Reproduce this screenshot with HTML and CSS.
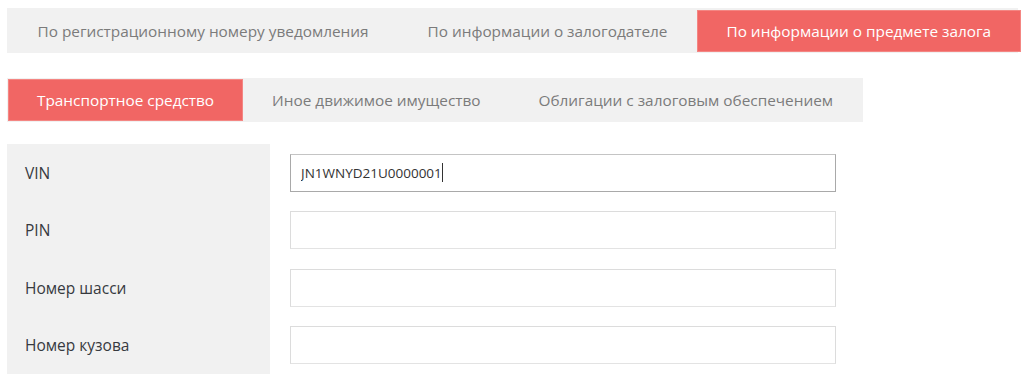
FILE: index.html
```html
<!DOCTYPE html>
<html lang="ru">
<head>
    <meta charset="UTF-8">
    <meta name="viewport" content="width=device-width, initial-scale=1.0">
    <title>Поиск в реестре залогов</title>
    <link rel="stylesheet" href="styles.css">
</head>
<body>
    <!-- Search mode tabs -->
    <div class="tabs tabs-main">
        <button class="tab">По регистрационному номеру уведомления</button>
        <button class="tab">По информации о залогодателе</button>
        <button class="tab active">По информации о предмете залога</button>
    </div>

    <!-- Pledge type tabs -->
    <div class="tabs tabs-sub">
        <button class="tab active">Транспортное средство</button>
        <button class="tab">Иное движимое имущество</button>
        <button class="tab">Облигации с залоговым обеспечением</button>
    </div>

    <!-- Vehicle form -->
    <form class="vehicle-form">
        <div class="form-row">
            <label for="vin">VIN</label>
            <div class="field"><input type="text" id="vin" class="is-focused" value="JN1WNYD21U0000001"><span class="caret"></span></div>
        </div>
        <div class="form-row">
            <label for="pin">PIN</label>
            <div class="field"><input type="text" id="pin"></div>
        </div>
        <div class="form-row">
            <label for="chassis">Номер шасси</label>
            <div class="field"><input type="text" id="chassis"></div>
        </div>
        <div class="form-row">
            <label for="body">Номер кузова</label>
            <div class="field"><input type="text" id="body"></div>
        </div>
    </form>
</body>
</html>
```

FILE: styles.css
```css
* {
    margin: 0;
    padding: 0;
    box-sizing: border-box;
}

:root {
    --accent: #f16664;
    --light: #f1f1f1;
    --muted: #7b7b7b;
    --text: #373a3f;
    --border: #dcdcdc;
}

body {
    font-family: 'Open Sans', 'Noto Sans', sans-serif;
    background: #fff;
    padding: 8px 6px 0 7px;
}

/* Tabs */
.tabs {
    display: flex;
    background-color: var(--light);
}

.tabs-main {
    padding: 2px 1px 1px 1px;
}

.tabs-sub {
    width: 856px;
    margin-top: 25px;
    padding: 1px;
}

.tab {
    height: 42px;
    padding: 0 29.5px;
    border: none;
    background: none;
    font-family: inherit;
    font-size: 15.35px;
    color: var(--muted);
    white-space: nowrap;
    cursor: pointer;
}

.tabs-sub .tab {
    padding: 0 29px;
}

.tab.active {
    background-color: var(--accent);
    color: #fff;
    box-shadow: inset 0 0 0 1px #f48683;
}

.tabs-main .tab.active {
    flex: 1;
}

/* Form */
.vehicle-form {
    margin-top: 22px;
    display: grid;
    grid-template-columns: 263px 566px;
    grid-auto-rows: 57.5px;
    background: linear-gradient(to right, var(--light) 263px, #fff 263px);
}

.form-row {
    display: contents;
}

.form-row label {
    display: flex;
    align-items: center;
    padding-left: 18px;
    font-size: 15.5px;
    color: var(--text);
}

.field {
    position: relative;
    display: flex;
    align-items: center;
    padding-left: 20px;
}

.field input {
    width: 546px;
    height: 38px;
    padding: 0 10px;
    border: 1px solid var(--border);
    border-bottom-color: #e3e3e3;
    font-family: inherit;
    font-size: 13.5px;
    color: #333;
    outline: none;
}

.field input.is-focused {
    border-color: #a9a9a9;
    border-top-color: #c4c4c4;
}

.caret {
    position: absolute;
    left: 172px;
    top: 19px;
    width: 1px;
    height: 19px;
    background: #333;
}
```
